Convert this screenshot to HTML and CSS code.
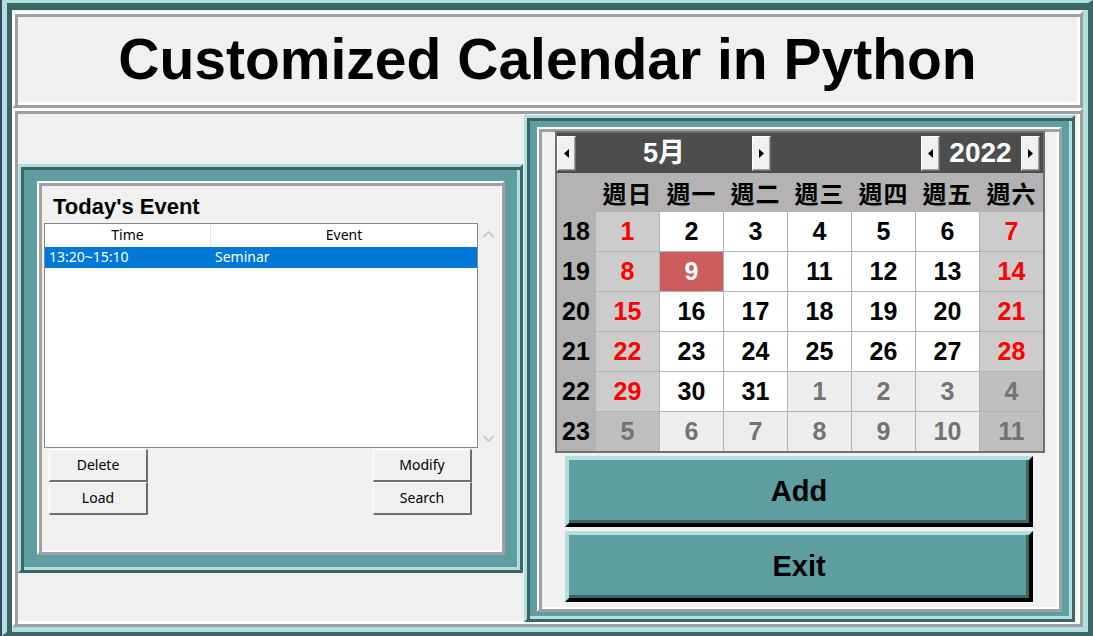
FILE: index.html
```html
<!DOCTYPE html>
<html>
<head>
<meta charset="utf-8">
<title>Customized Calendar in Python</title>
<link rel="stylesheet" href="styles.css">
</head>
<body>
<div class="window">
  <div class="title-frame">
    <h1 class="title">Customized Calendar in Python</h1>
  </div>
  <div class="main-frame">
    <div class="teal-frame left-teal">
      <div class="panel event-panel">
        <div class="event-title">Today's Event</div>
        <div class="tree-row">
          <div class="tree">
            <div class="tree-head">
              <div class="col-time">Time</div>
              <div class="col-event">Event</div>
            </div>
            <div class="tree-item selected">
              <div class="col-time">13:20~15:10</div>
              <div class="col-event">Seminar</div>
            </div>
          </div>
          <div class="scrollbar">
            <svg class="chev" width="21" height="12" viewBox="0 0 21 12"><polyline points="5.5,9 10.5,4 15.5,9" fill="none" stroke="#c4c4c4" stroke-width="1.6"/></svg>
            <svg class="chev" width="21" height="12" viewBox="0 0 21 12"><polyline points="5.5,4 10.5,9 15.5,4" fill="none" stroke="#c4c4c4" stroke-width="1.6"/></svg>
          </div>
        </div>
        <div class="btn-grid">
          <button class="btn">Delete</button>
          <span></span>
          <button class="btn">Modify</button>
          <button class="btn">Load</button>
          <span></span>
          <button class="btn">Search</button>
        </div>
      </div>
    </div>
    <div class="teal-frame right-teal">
      <div class="panel cal-panel">
        <div class="calendar">
          <div class="cal-header">
            <div class="arrow-btn"><svg width="5" height="9" viewBox="0 0 5 9"><polygon points="5,0 0,4.5 5,9" fill="#000"/></svg></div>
            <div class="month">5月</div>
            <div class="arrow-btn"><svg width="5" height="9" viewBox="0 0 5 9"><polygon points="0,0 5,4.5 0,9" fill="#000"/></svg></div>
            <div class="spacer"></div>
            <div class="arrow-btn"><svg width="5" height="9" viewBox="0 0 5 9"><polygon points="5,0 0,4.5 5,9" fill="#000"/></svg></div>
            <div class="year">2022</div>
            <div class="arrow-btn"><svg width="5" height="9" viewBox="0 0 5 9"><polygon points="0,0 5,4.5 0,9" fill="#000"/></svg></div>
          </div>
          <div class="cal-grid">
            <div class="c hd"></div>
            <div class="c dow">週日</div><div class="c dow">週一</div><div class="c dow">週二</div><div class="c dow">週三</div><div class="c dow">週四</div><div class="c dow">週五</div><div class="c dow">週六</div>

            <div class="c wk">18</div>
            <div class="c we">1</div><div class="c wd">2</div><div class="c wd">3</div><div class="c wd">4</div><div class="c wd">5</div><div class="c wd">6</div><div class="c we">7</div>

            <div class="c wk">19</div>
            <div class="c we">8</div><div class="c sel">9</div><div class="c wd">10</div><div class="c wd">11</div><div class="c wd">12</div><div class="c wd">13</div><div class="c we">14</div>

            <div class="c wk">20</div>
            <div class="c we">15</div><div class="c wd">16</div><div class="c wd">17</div><div class="c wd">18</div><div class="c wd">19</div><div class="c wd">20</div><div class="c we">21</div>

            <div class="c wk">21</div>
            <div class="c we">22</div><div class="c wd">23</div><div class="c wd">24</div><div class="c wd">25</div><div class="c wd">26</div><div class="c wd">27</div><div class="c we">28</div>

            <div class="c wk">22</div>
            <div class="c we">29</div><div class="c wd">30</div><div class="c wd">31</div><div class="c om">1</div><div class="c om">2</div><div class="c om">3</div><div class="c omwe">4</div>

            <div class="c wk">23</div>
            <div class="c omwe">5</div><div class="c om">6</div><div class="c om">7</div><div class="c om">8</div><div class="c om">9</div><div class="c om">10</div><div class="c omwe">11</div>
          </div>
        </div>
        <button class="big-btn add-btn">Add</button>
        <button class="big-btn exit-btn">Exit</button>
      </div>
    </div>
  </div>
</div>
</body>
</html>
```

FILE: styles.css
```css
* { box-sizing: border-box; }

html, body {
  margin: 0;
  padding: 0;
}

body {
  width: 1093px;
  height: 636px;
  overflow: hidden;
  background: #3a4660;
  font-family: "Liberation Sans", "Noto Sans CJK TC", sans-serif;
}

.window {
  margin-left: 2px;
  width: 1091px;
  height: 636px;
  background: #f0f0f0;
  border-style: solid;
  border-width: 3px 5px 4px 5px;
  border-color: #b0dfe0 #3c6566 #3c6566 #b0dfe0;
  box-shadow: inset 5px 7px 0 #3c6566, inset -5px -5px 0 #b0dfe0;
  padding: 8px 5px 5px 5px;
  display: flex;
  flex-direction: column;
}

/* light grey ridge */
.title-frame,
.main-frame {
  border-style: solid;
  border-width: 3px;
  border-color: #ffffff #a0a0a0 #a0a0a0 #ffffff;
  box-shadow: inset 3px 3px 0 #a0a0a0, inset -3px -3px 0 #ffffff;
}

.title-frame {
  height: 97px;
  display: flex;
  align-items: center;
  justify-content: center;
  flex: none;
}

.title {
  margin: 0;
  font-family: "Liberation Sans", Arial, sans-serif;
  font-weight: bold;
  font-size: 57px;
  line-height: 1;
  color: #000;
}

.main-frame {
  flex: 1;
  display: flex;
  align-items: center;
  padding: 3px 5px 2px 3px;
}

/* teal ridge */
.teal-frame {
  background: #5f9ea0;
  border-style: solid;
  border-width: 3px;
  border-color: #b0dfe0 #3c6566 #3c6566 #b0dfe0;
  box-shadow: inset 3px 3px 0 #3c6566, inset -3px -3px 0 #b0dfe0;
  display: flex;
}

.left-teal {
  width: 505px;
  height: 409px;
  padding: 14px 15px 15px 16px;
}

.right-teal {
  margin-left: 1px;
  width: 551px;
  align-self: stretch;
  margin-top: 1px;
  padding: 9px 10px 7px 10px;
}

/* light panel inside teal */
.panel {
  flex: 1;
  background: #f0f0f0;
  border-style: solid;
  border-width: 2px 3px 3px 2px;
  border-color: #ffffff #a0a0a0 #a0a0a0 #ffffff;
  box-shadow: inset 3px 3px 0 #a0a0a0, inset -2px -2px 0 #ffffff;
  padding: 3px 2px 2px 3px;
  display: flex;
  flex-direction: column;
}

/* ---- events panel ---- */
.event-title {
  margin-left: 11px;
  padding-top: 8px;
  height: 34px;
  line-height: 26px;
  font-size: 22px;
  font-weight: bold;
  color: #000;
  margin-bottom: 3px;
}

.tree-row {
  display: flex;
  margin-left: 2px;
  height: 225px;
}

.tree {
  width: 434px;
  background: #fff;
  border: 1px solid #828790;
  font-family: "Noto Sans", "Liberation Sans", sans-serif;
  font-size: 14px;
}

.tree-head {
  display: flex;
  height: 23px;
  line-height: 21px;
  color: #000;
}

.tree-head .col-time,
.tree-head .col-event {
  text-align: center;
}

.tree-head .col-event {
  border-left: 1px solid #e5e5e5;
}

.col-time {
  width: 165px;
}

.col-event {
  flex: 1;
}

.tree-item {
  display: flex;
  height: 21px;
  line-height: 20px;
}

.tree-item .col-time { padding-left: 4px; }
.tree-item .col-event { padding-left: 5px; }

.tree-item.selected {
  background: #0078d7;
  color: #fff;
}

.scrollbar {
  width: 21px;
  display: flex;
  flex-direction: column;
  justify-content: space-between;
  padding: 5px 0 4px 0;
}

.chev { display: block; }

.btn-grid {
  margin-top: 1px;
  margin-left: 7px;
  width: 423px;
  display: grid;
  grid-template-columns: 99px 1fr 99px;
  grid-template-rows: 33px 33px;
}

.btn {
  margin: 0;
  padding: 0;
  background: #f0f0f0;
  border-style: solid;
  border-width: 1px 2px 2px 1px;
  border-color: #ffffff #6e6e6e #6e6e6e #ffffff;
  font-family: "Noto Sans", "Liberation Sans", sans-serif;
  font-size: 14px;
  color: #000;
}

/* ---- calendar panel ---- */
.cal-panel {
  padding: 2px 10px 0 11px;
}

.calendar {
  margin-left: 5px;
  width: 490px;
  border: 2px solid #6f6f6f;
  background: #4d4d4d;
}

.cal-header {
  height: 40px;
  display: flex;
  align-items: center;
  padding-right: 3px;
  background: #4d4d4d;
}

.arrow-btn {
  width: 19px;
  height: 35px;
  background: #f0f0f0;
  border-style: solid;
  border-width: 1px;
  border-color: #ffffff #6e6e6e #6e6e6e #ffffff;
  box-shadow: inset -1px -1px 0 #a0a0a0;
  display: flex;
  align-items: center;
  justify-content: center;
  flex: none;
}

.arrow-btn svg { display: block; }

.month,
.year {
  color: #fff;
  font-weight: bold;
  font-size: 27px;
  text-align: center;
  line-height: 34px;
  font-family: "Liberation Sans", "Noto Sans CJK TC", sans-serif;
}

.month { width: 176px; }
.year { width: 81px; font-size: 28px; }

.spacer { flex: 1; }

.cal-grid {
  display: grid;
  grid-template-columns: 38px repeat(7, 63px);
  grid-template-rows: 38px repeat(6, 39px);
  gap: 1px;
  background: #b3b3b3;
}

.c {
  display: flex;
  align-items: center;
  justify-content: center;
  font-weight: bold;
  font-size: 25px;
  font-family: "Liberation Sans", Arial, sans-serif;
}

.hd { background: #b3b3b3; }

.dow {
  background: #b3b3b3;
  color: #000;
  font-family: "Noto Sans CJK TC", sans-serif;
  font-weight: 700;
  font-size: 24px;
  letter-spacing: 1px;
}

.wk { background: #b3b3b3; color: #000; }
.wd { background: #ffffff; color: #000; }
.we { background: #cccccc; color: #ff0000; }
.om { background: #ededed; color: #737373; }
.omwe { background: #bfbfbf; color: #737373; }
.sel { background: #cd5c5c; color: #ffffff; }

.big-btn {
  margin: 0 0 0 15px;
  width: 468px;
  height: 71px;
  padding: 0;
  background: #5f9ea0;
  border-style: solid;
  border-width: 4px;
  border-color: #b0dfe0 #000000 #000000 #b0dfe0;
  box-shadow: inset -3px -3px 0 #3c6566;
  font-family: "Liberation Sans", Arial, sans-serif;
  font-weight: bold;
  font-size: 29px;
  color: #000;
}

.add-btn { margin-top: 3px; }
.exit-btn { margin-top: 4px; }
```
